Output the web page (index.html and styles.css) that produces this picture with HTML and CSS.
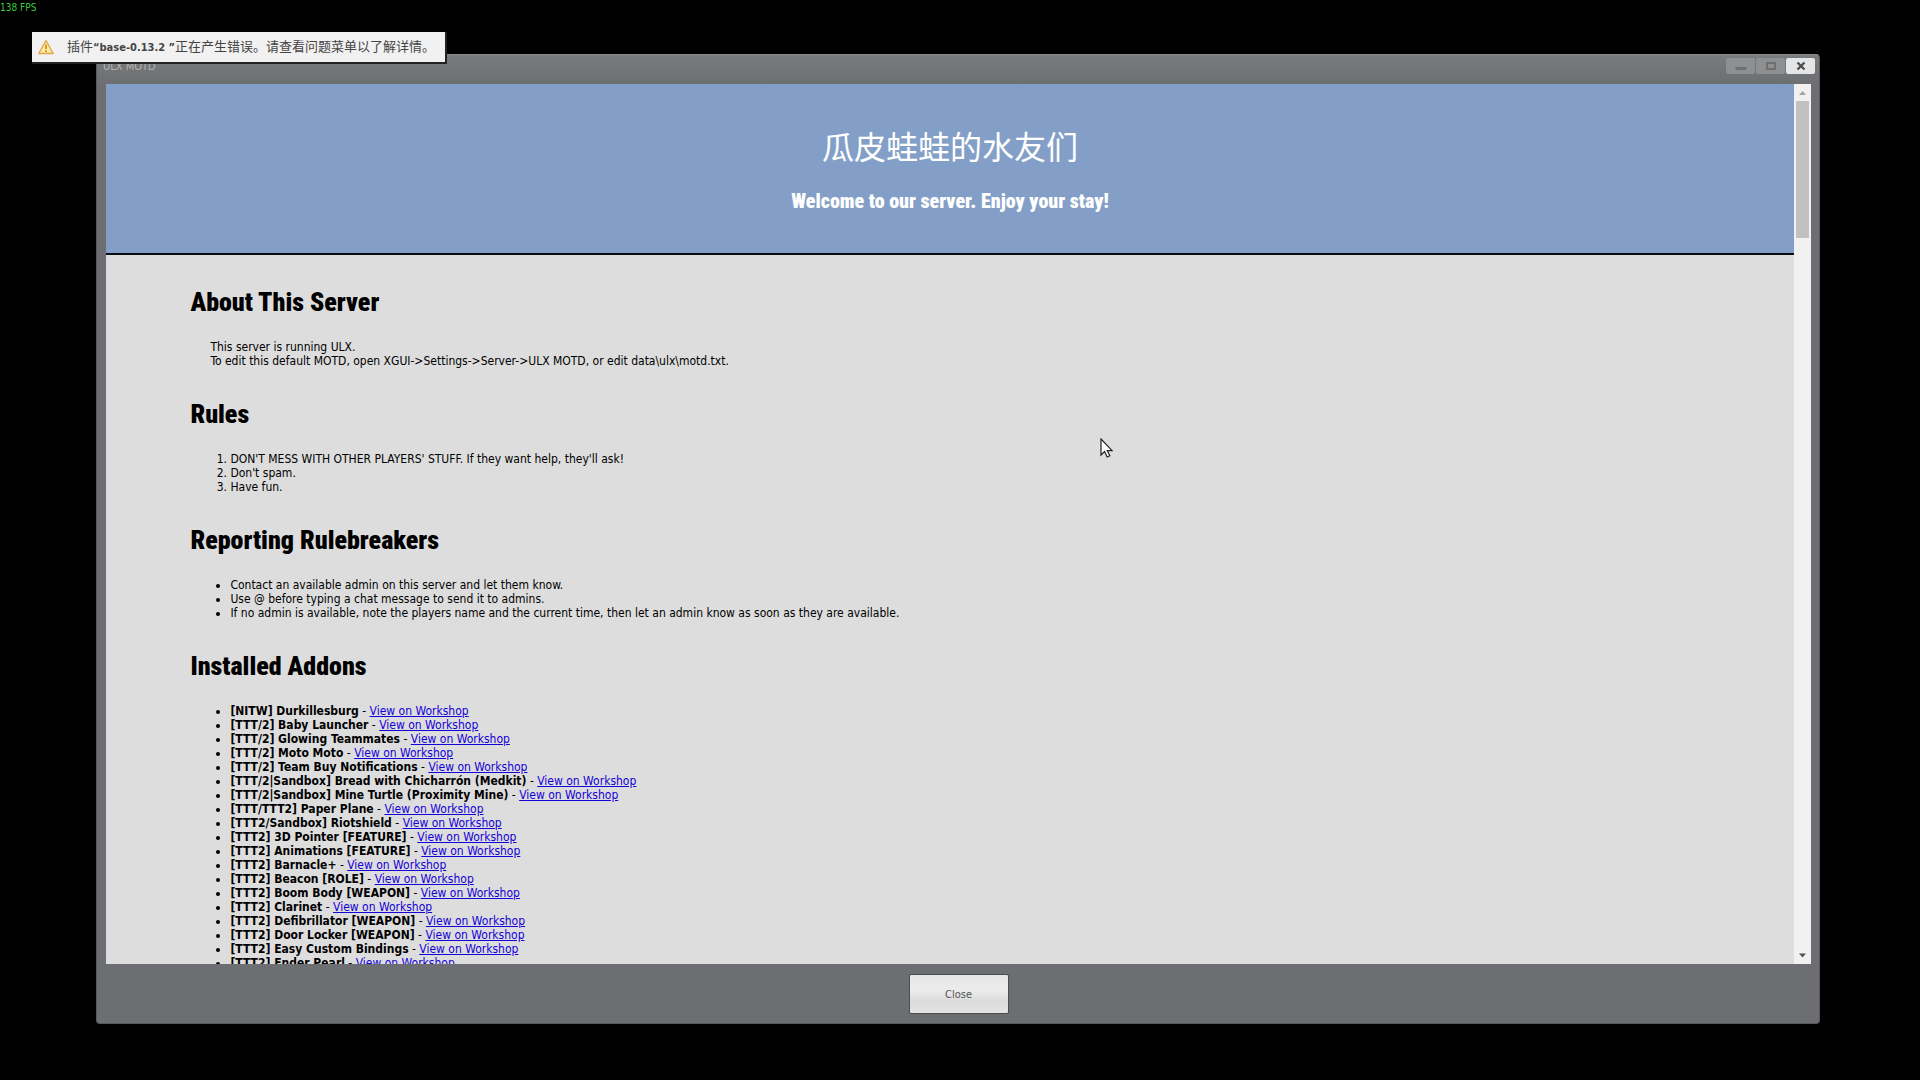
FILE: index.html
```
<!DOCTYPE html>
<html lang="zh-CN">
<head>
    <meta charset="UTF-8">
    <meta name="viewport" content="width=device-width, initial-scale=1.0">
    <title>ULX MOTD</title>
    <link rel="stylesheet" href="styles.css">
</head>
<body>
    <div class="fps">138 FPS</div>

    <!-- MOTD window -->
    <div class="window">
        <div class="titlebar">
            <span class="title">ULX MOTD</span>
            <div class="controls">
                <button class="control" aria-label="Minimize" disabled>
                    <svg width="12" height="10" viewBox="0 0 12 10"><path d="M0.5 6h11v3h-11z" fill="#6f6f70"/></svg>
                </button>
                <button class="control" aria-label="Maximize" disabled>
                    <svg width="10" height="8" viewBox="0 0 10 8"><path d="M1 1h8v6H1z" fill="none" stroke="#6f6f70" stroke-width="2"/></svg>
                </button>
                <button class="control control-close" aria-label="Close window">
                    <svg width="10" height="8" viewBox="0 0 10 8"><path d="M1.5 0.5l7 7M8.5 0.5l-7 7" stroke="#4c4c4c" stroke-width="2.2"/></svg>
                </button>
            </div>
        </div>

        <div class="viewport">
            <div class="page">
                <header class="header">
                    <h1>瓜皮蛙蛙的水友们</h1>
                    <h3>Welcome to our server. Enjoy your stay!</h3>
                </header>
                <main class="content">
                    <h2>About This Server</h2>
                    <p>This server is running ULX.<br>To edit this default MOTD, open XGUI-&gt;Settings-&gt;Server-&gt;ULX MOTD, or edit data\ulx\motd.txt.</p>

                    <h2>Rules</h2>
                    <ol>
                        <li>DON'T MESS WITH OTHER PLAYERS' STUFF. If they want help, they'll ask!</li>
                        <li>Don't spam.</li>
                        <li>Have fun.</li>
                    </ol>

                    <h2>Reporting Rulebreakers</h2>
                    <ul>
                        <li>Contact an available admin on this server and let them know.</li>
                        <li>Use @ before typing a chat message to send it to admins.</li>
                        <li>If no admin is available, note the players name and the current time, then let an admin know as soon as they are available.</li>
                    </ul>

                    <h2>Installed Addons</h2>
                    <ul>
                        <li><b>[NITW] Durkillesburg</b> - <a href="#">View on Workshop</a></li>
                        <li><b>[TTT/2] Baby Launcher</b> - <a href="#">View on Workshop</a></li>
                        <li><b>[TTT/2] Glowing Teammates</b> - <a href="#">View on Workshop</a></li>
                        <li><b>[TTT/2] Moto Moto</b> - <a href="#">View on Workshop</a></li>
                        <li><b>[TTT/2] Team Buy Notifications</b> - <a href="#">View on Workshop</a></li>
                        <li><b>[TTT/2|Sandbox] Bread with Chicharrón (Medkit)</b> - <a href="#">View on Workshop</a></li>
                        <li><b>[TTT/2|Sandbox] Mine Turtle (Proximity Mine)</b> - <a href="#">View on Workshop</a></li>
                        <li><b>[TTT/TTT2] Paper Plane</b> - <a href="#">View on Workshop</a></li>
                        <li><b>[TTT2/Sandbox] Riotshield</b> - <a href="#">View on Workshop</a></li>
                        <li><b>[TTT2] 3D Pointer [FEATURE]</b> - <a href="#">View on Workshop</a></li>
                        <li><b>[TTT2] Animations [FEATURE]</b> - <a href="#">View on Workshop</a></li>
                        <li><b>[TTT2] Barnacle+</b> - <a href="#">View on Workshop</a></li>
                        <li><b>[TTT2] Beacon [ROLE]</b> - <a href="#">View on Workshop</a></li>
                        <li><b>[TTT2] Boom Body [WEAPON]</b> - <a href="#">View on Workshop</a></li>
                        <li><b>[TTT2] Clarinet</b> - <a href="#">View on Workshop</a></li>
                        <li><b>[TTT2] Defibrillator [WEAPON]</b> - <a href="#">View on Workshop</a></li>
                        <li><b>[TTT2] Door Locker [WEAPON]</b> - <a href="#">View on Workshop</a></li>
                        <li><b>[TTT2] Easy Custom Bindings</b> - <a href="#">View on Workshop</a></li>
                        <li><b>[TTT2] Ender Pearl</b> - <a href="#">View on Workshop</a></li>
                    </ul>
                </main>
            </div>
            <div class="scrollbar">
                <svg class="arrow" width="17" height="17" viewBox="0 0 17 17"><path d="M5 11l3.5-4 3.5 4z" fill="#a3a3a3"/></svg>
                <div class="track"><div class="thumb"></div></div>
                <svg class="arrow" width="17" height="17" viewBox="0 0 17 17"><path d="M5 6.500h7l-3.500 4z" fill="#505050"/></svg>
            </div>
        </div>

        <div class="footer">
            <button class="close-button">Close</button>
        </div>
    </div>

    <!-- Error notification -->
    <div class="notice" role="alert">
        <svg width="16" height="16" viewBox="0 0 16 16">
            <path d="M8 1.500L15.200 14.500H0.800z" fill="#fbe9a6" stroke="#dfa54a" stroke-width="1.300" stroke-linejoin="round"/>
            <path d="M8 5.500v4.500M8 11.200v1.800" stroke="#d89a20" stroke-width="2"/>
        </svg>
        <span>插件<b>“base-0.13.2 ”</b>正在产生错误。请查看问题菜单以了解详情。</span>
    </div>

    <svg class="cursor" width="13" height="20" viewBox="0 0 13 20">
        <path d="M1 1v16l3.600-3.400 2.600 5.400 2.600-1.200-2.500-5.100h4.900z" fill="#fff" stroke="#222" stroke-width="1.200"/>
    </svg>
</body>
</html>
```
FILE: styles.css
```
* {
    margin: 0;
    padding: 0;
    box-sizing: border-box;
}

body {
    height: 100vh;
    overflow: hidden;
    background: #000;
    color: #000;
    font-family: "DejaVu Sans Condensed", "Noto Sans CJK SC", sans-serif;
    font-size: 12px;
    line-height: 14px;
}

.fps {
    padding-top: 1px;
    color: #3cc83c;
    font-size: 10px;
}

/* Window */
.window {
    position: absolute;
    top: 54px;
    right: 100px;
    bottom: 56px;
    left: 96px;
    display: flex;
    flex-direction: column;
    padding: 0 8px 0 9px;
    background: linear-gradient(#7a7b7c, #6d6e71 30px);
    border: 1px solid #58595b;
    border-top-color: #8a8b8c;
    border-radius: 4px;
}

.titlebar {
    display: flex;
    justify-content: space-between;
    height: 29px;
    margin: 0 -4px;
    padding-top: 3px;
}

.title {
    padding: 2px 1px;
    color: #b4b5b6;
    font-size: 11px;
}

.controls {
    display: flex;
    gap: 1px;
}

.control {
    display: flex;
    align-items: center;
    justify-content: center;
    width: 29px;
    height: 16px;
    background: #8e8f90;
    border: none;
    border-radius: 2px;
}

.control-close {
    background: #e4e5e6;
}

.viewport {
    flex: 1;
    display: flex;
    min-height: 0;
    background: #ddd;
}

.page {
    flex: 1;
    overflow: hidden;
}

/* Page header */
.header {
    padding: 44px 0 40px;
    background: #849fc7;
    border-bottom: 2px solid #0a0a14;
    color: #fff;
    text-align: center;
}

.header h1 {
    font-size: 32px;
    font-weight: 400;
    line-height: 40px;
}

.header h3 {
    margin-top: 21px;
    font-family: "Roboto Condensed", "DejaVu Sans Condensed", sans-serif;
    font-size: 20px;
    font-weight: 900;
    line-height: 24px;
}

/* Page content */
.content {
    padding: 1px 5% 0;
}

.content h2 {
    margin: 29px 0 21px;
    font-family: "Roboto Condensed", "DejaVu Sans Condensed", sans-serif;
    font-size: 26px;
    font-weight: 900;
    line-height: 34px;
}

.content p {
    padding-left: 20px;
}

.content ol,
.content ul {
    padding-left: 40px;
}

.content a {
    color: #1400d8;
}

/* Scrollbar */
.scrollbar {
    display: flex;
    flex-direction: column;
    width: 17px;
    background: #f1f1f1;
}

.track {
    flex: 1;
    padding: 0 2px;
}

.thumb {
    height: 137px;
    background: #c1c1c1;
}

/* Footer */
.footer {
    display: flex;
    justify-content: center;
    padding: 10px 0 9px;
}

.close-button {
    width: 100px;
    height: 40px;
    background: linear-gradient(#e6e6e6, #ececec 40%, #dadada 70%, #e4e4e4);
    border: 1px solid #4c4d4f;
    border-radius: 2px;
    color: #555;
    font-family: inherit;
    font-size: 11px;
}

/* Notification */
.notice {
    position: absolute;
    top: 32px;
    left: 32px;
    display: flex;
    align-items: center;
    gap: 13px;
    height: 30px;
    padding: 0 10px 0 6px;
    background: #f1f1f1;
    box-shadow: 1px 1px 0 1px #222;
    color: #444;
    font-size: 13px;
    white-space: nowrap;
}

.notice b {
    font-size: 11px;
}

.cursor {
    position: absolute;
    top: 438px;
    left: 1100px;
}
```
